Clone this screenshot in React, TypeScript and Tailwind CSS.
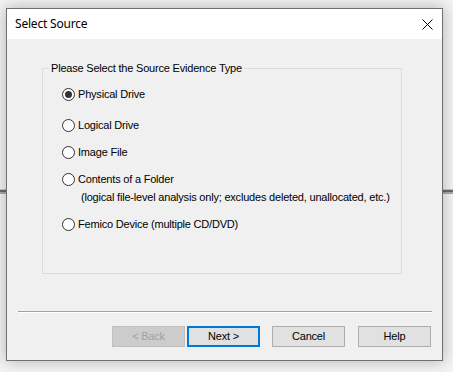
const BUTTONS = [
  { label: '< Back', cls: 'ml-[105px] bg-[#cccccc] border border-[#bfbfbf] text-[#a0a0a0]' },
  { label: 'Next >', cls: 'ml-[2px] bg-[#e1e1e1] border-2 border-[#0078d7] text-black' },
  { label: 'Cancel', cls: 'ml-[12px] bg-[#e1e1e1] border border-[#adadad] text-black' },
  { label: 'Help', cls: 'ml-[13px] bg-[#e1e1e1] border border-[#adadad] text-black' },
];

function Radio({ checked }: { checked?: boolean }) {
  return (
    <span className="w-[13px] h-[13px] rounded-full border border-[#333333] bg-white flex items-center justify-center shrink-0">
      {checked && <span className="w-[7px] h-[7px] rounded-full bg-[#333333]" />}
    </span>
  );
}

function Option({ label, checked, className }: { label: string; checked?: boolean; className: string }) {
  return (
    <div className={`flex items-center gap-[3px] h-[13px] ${className}`}>
      <Radio checked={checked} />
      <span className="leading-[13px]">{label}</span>
    </div>
  );
}

export default function App() {
  return (
    <div
      className="relative w-[453px] h-[372px] overflow-hidden bg-[#f3f3f3] pt-[8px] pl-[6px]"
      style={{ fontFamily: '"Liberation Sans", Arial, sans-serif' }}
    >
      {/* app behind the dialog */}
      <div className="absolute left-0 right-0 top-[189px] h-[5px] border-t border-[#c8c8c8] bg-[#6a6a6a] border-b-2 border-b-[#a8a8a8]" />

      {/* Dialog */}
      <div className="relative w-[437px] h-[353px] border border-[#707070] bg-[#f0f0f0] shadow-[0_0_14px_rgba(0,0,0,0.28)] flex flex-col">
        {/* Title bar */}
        <div className="h-[30px] bg-white flex items-center justify-between pl-[8px] pr-[9px] shrink-0">
          <span className="text-[12px] text-black tracking-[-0.2px]" style={{ fontFamily: '"Noto Sans", sans-serif' }}>
            Select Source
          </span>
          <svg width="11" height="11" viewBox="0 0 11 11" className="mr-[0px]">
            <path d="M0.5 0.5 L10.5 10.5 M10.5 0.5 L0.5 10.5" stroke="#000" strokeWidth="1" fill="none" />
          </svg>
        </div>

        {/* Body */}
        <div className="flex-1 flex flex-col text-[11px] text-black tracking-[-0.2px]">
          <fieldset className="ml-[35px] mt-[23px] w-[360px] h-[212px] border border-[#dcdcdc]">
            <legend className="ml-[6px] px-[2px] leading-[13px]">Please Select the Source Evidence Type</legend>
            <div className="flex flex-col pl-[19px]">
              <Option label="Physical Drive" checked className="mt-[13px]" />
              <Option label="Logical Drive" className="mt-[18px]" />
              <Option label="Image File" className="mt-[14px]" />
              <Option label="Contents of a Folder" className="mt-[14px]" />
              <div className="mt-[5px] ml-[19px] leading-[13px]">
                (logical file-level analysis only; excludes deleted, unallocated, etc.)
              </div>
              <Option label="Femico Device (multiple CD/DVD)" className="mt-[14px]" />
            </div>
          </fieldset>

          <div className="ml-[11px] mt-[37px] w-[414px] border-t border-[#a0a0a0] border-b border-b-white" />

          <div className="flex mt-[13px]">
            {BUTTONS.map((b) => (
              <div key={b.label} className={`w-[73px] h-[21px] flex items-center justify-center ${b.cls}`}>
                {b.label}
              </div>
            ))}
          </div>
        </div>
      </div>
    </div>
  );
}
